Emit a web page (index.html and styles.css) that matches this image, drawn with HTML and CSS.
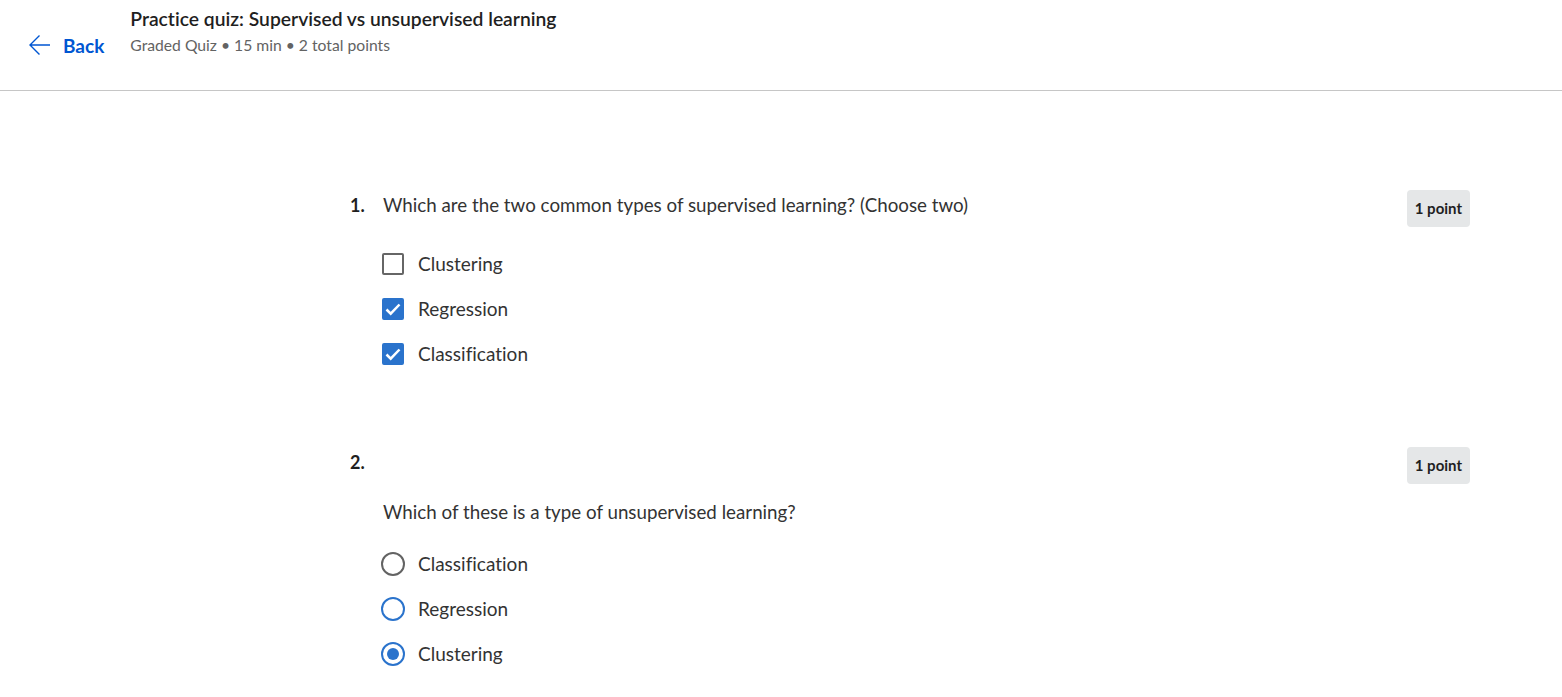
FILE: index.html
```html
<!DOCTYPE html>
<html lang="en">
<head>
<meta charset="utf-8">
<title>Practice quiz</title>
<link rel="stylesheet" href="styles.css">
</head>
<body>
<header class="topbar">
  <a class="back" href="#">
    <svg class="back-icon" width="24" height="24" viewBox="0 0 24 24" aria-hidden="true">
      <path d="M22 12H2.5M11.5 2.5L2 12l9.5 9.5" fill="none" stroke="#0056d2" stroke-width="1.4"/>
    </svg>
    <span>Back</span>
  </a>
  <div class="heading">
    <h1 class="title">Practice quiz: Supervised vs unsupervised learning</h1>
    <div class="meta">Graded Quiz • 15 min • 2 total points</div>
  </div>
</header>
<main class="quiz">
  <section class="question q1">
    <div class="qhead">
      <span class="qnum">1.</span>
      <span class="qtext">Which are the two common types of supervised learning? (Choose two)</span>
      <span class="badge">1 point</span>
    </div>
    <ul class="options">
      <li class="option"><span class="box"></span><span>Clustering</span></li>
      <li class="option"><span class="box checked"><svg viewBox="0 0 22 22" width="22" height="22"><path d="M4.5 11.5l4.2 4.2 8.8-9.2" fill="none" stroke="#fff" stroke-width="2.5"/></svg></span><span>Regression</span></li>
      <li class="option"><span class="box checked"><svg viewBox="0 0 22 22" width="22" height="22"><path d="M4.5 11.5l4.2 4.2 8.8-9.2" fill="none" stroke="#fff" stroke-width="2.5"/></svg></span><span>Classification</span></li>
    </ul>
  </section>
  <section class="question q2">
    <div class="qhead">
      <span class="qnum">2.</span>
      <span class="qtext"></span>
      <span class="badge">1 point</span>
    </div>
    <p class="prompt">Which of these is a type of unsupervised learning?</p>
    <ul class="options">
      <li class="option"><span class="radio"></span><span>Classification</span></li>
      <li class="option"><span class="radio blue"></span><span>Regression</span></li>
      <li class="option"><span class="radio selected"></span><span>Clustering</span></li>
    </ul>
  </section>
</main>
</body>
</html>
```

FILE: styles.css
```css
* { box-sizing: border-box; }
html, body { margin: 0; padding: 0; background: #fff; }
body {
  font-family: "Lato", "Noto Sans", sans-serif;
  font-variant-ligatures: none;
  color: #1f1f1f;
  width: 1562px;
  height: 697px;
  overflow: hidden;
}
.topbar {
  height: 91px;
  border-bottom: 1px solid #c6c6c6;
  display: flex;
  align-items: flex-start;
  padding: 7px 0 0 28px;
}
.back {
  display: flex;
  align-items: center;
  gap: 11px;
  margin-top: 26px;
  color: #0056d2;
  text-decoration: none;
  font-weight: 700;
  font-size: 19px;
}
.back-icon { display: block; }
.heading { margin-left: 26px; }
.title {
  margin: 0;
  font-size: 19.3px;
  font-weight: 600;
  line-height: 24px;
  color: #1f1f1f;
}
.meta {
  margin-top: 3px;
  font-size: 15.7px;
  line-height: 22px;
  color: #636363;
}
.quiz {
  padding: 99px 92px 0 350px;
}
.q2 { margin-top: 71px; }
.qhead {
  display: flex;
  align-items: flex-start;
  height: 37px;
}
.qnum {
  width: 33px;
  font-weight: 700;
  font-size: 18px;
  line-height: 30px;
}
.qtext {
  flex: 1;
  font-size: 18.75px;
  line-height: 30px;
  color: #333;
}
.badge {
  background: #e5e7e8;
  border-radius: 4px;
  font-size: 15px;
  font-weight: 700;
  height: 37px;
  line-height: 37px;
  padding: 0 8px;
  color: #1f1f1f;
}
.prompt {
  margin: 13px 0 0 33px;
  font-size: 18.75px;
  line-height: 30px;
  color: #333;
}
.options {
  list-style: none;
  margin: 0;
  padding: 0 0 0 32px;
}
.q1 .options { margin-top: 14px; }
.q2 .options { margin-top: 14px; }
.option {
  display: flex;
  align-items: center;
  gap: 14px;
  height: 45px;
  font-size: 19px;
  color: #333;
}
.box {
  width: 22px;
  height: 22px;
  border: 2px solid #666;
  border-radius: 2px;
  position: relative;
  flex: none;
}
.box.checked {
  background: #2a73cc;
  border-color: #2a73cc;
}
.box svg { position: absolute; left: -2px; top: -2px; }
.radio {
  width: 24px;
  height: 24px;
  border: 2px solid #636363;
  border-radius: 50%;
  flex: none;
  margin-left: -1px;
  margin-right: -1px;
  position: relative;
}
.radio.blue { border-color: #2a73cc; }
.radio.selected { border-color: #2a73cc; }
.radio.selected::after {
  content: "";
  position: absolute;
  left: 4px; top: 4px;
  width: 12px; height: 12px;
  border-radius: 50%;
  background: #2a73cc;
}
```
